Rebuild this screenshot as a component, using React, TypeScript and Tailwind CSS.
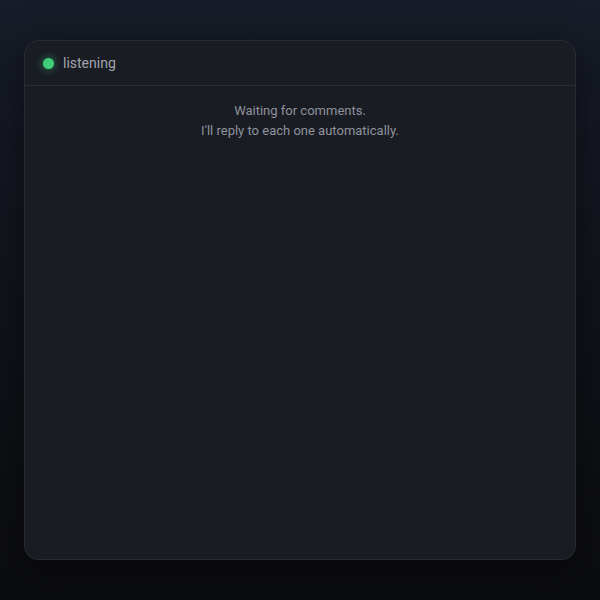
import React from "react";

export default function App() {
  return (
    <div
      className="w-[600px] h-[600px] bg-gradient-to-b from-[#171c28] to-[#0b0c0f] px-6 pt-10 pb-10 flex"
      style={{ fontFamily: "Roboto, 'Noto Sans', sans-serif" }}
    >
      <div className="flex-1 flex flex-col rounded-[14px] border border-[#272a33] bg-[#1a1c24] shadow-[0_10px_40px_rgba(0,0,0,0.5)] overflow-hidden">
        <div className="h-[45px] flex items-center gap-[9px] px-[18px] border-b border-[#2a2d36]">
          <span className="w-[11px] h-[11px] rounded-full bg-[#3fcf7a] shadow-[0_0_8px_rgba(63,207,122,0.6)]" />
          <span className="text-[14px] text-[#a1a5ae]">listening</span>
        </div>
        <div className="pt-[15px] text-center text-[13px] leading-[20px] text-[#8e929b]">
          <p>Waiting for comments.</p>
          <p>I'll reply to each one automatically.</p>
        </div>
      </div>
    </div>
  );
}
